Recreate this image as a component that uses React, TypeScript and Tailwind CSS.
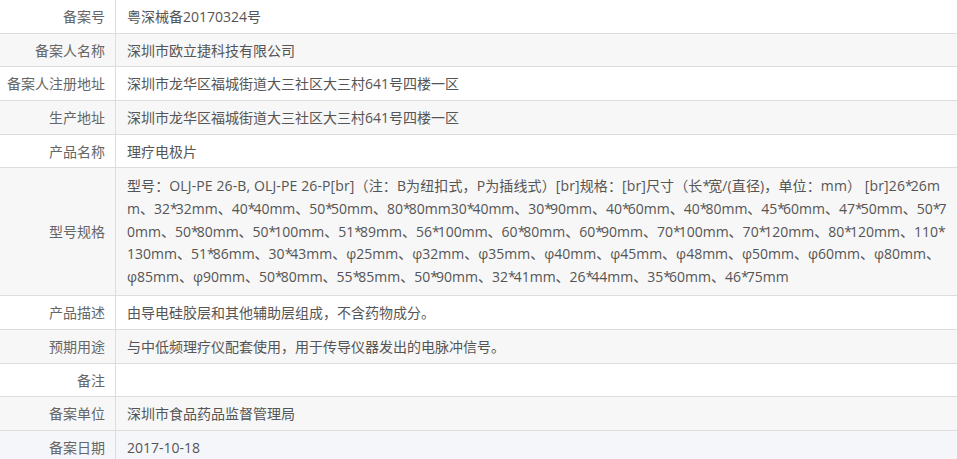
import React from 'react';

type Row = { label: string; value: string | string[]; h: string };

const specLines = [
  '型号：OLJ-PE 26-B, OLJ-PE 26-P[br]（注：B为纽扣式，P为插线式）[br]规格：[br]尺寸（长*宽/(直径)，单位：mm） [br]26*26m',
  'm、32*32mm、40*40mm、50*50mm、80*80mm30*40mm、30*90mm、40*60mm、40*80mm、45*60mm、47*50mm、50*7',
  '0mm、50*80mm、50*100mm、51*89mm、56*100mm、60*80mm、60*90mm、70*100mm、70*120mm、80*120mm、110*',
  '130mm、51*86mm、30*43mm、φ25mm、φ32mm、φ35mm、φ40mm、φ45mm、φ48mm、φ50mm、φ60mm、φ80mm、',
  'φ85mm、φ90mm、50*80mm、55*85mm、50*90mm、32*41mm、26*44mm、35*60mm、46*75mm',
];

// row heights include the 1px top border
const rows: Row[] = [
  { label: '备案号', value: '粤深械备20170324号', h: 'h-[34px]' },
  { label: '备案人名称', value: '深圳市欧立捷科技有限公司', h: 'h-[33px]' },
  { label: '备案人注册地址', value: '深圳市龙华区福城街道大三社区大三村641号四楼一区', h: 'h-[34px]' },
  { label: '生产地址', value: '深圳市龙华区福城街道大三社区大三村641号四楼一区', h: 'h-[34px]' },
  { label: '产品名称', value: '理疗电极片', h: 'h-[33px]' },
  { label: '型号规格', value: specLines, h: 'h-[128px]' },
  { label: '产品描述', value: '由导电硅胶层和其他辅助层组成，不含药物成分。', h: 'h-[34px]' },
  { label: '预期用途', value: '与中低频理疗仪配套使用，用于传导仪器发出的电脉冲信号。', h: 'h-[34px]' },
  { label: '备注', value: '', h: 'h-[33px]' },
  { label: '备案单位', value: '深圳市食品药品监督管理局', h: 'h-[34px]' },
  { label: '备案日期', value: '2017-10-18', h: 'h-[34px]' },
];

const rowBg = (i: number) => {
  if (i === rows.length - 1) return 'bg-[#f5f6fa]';
  return i % 2 === 1 ? 'bg-[#f7f7f7]' : 'bg-white';
};

// the asterisks are a bit wide in Open Sans, pull them in
const SpecLine = ({ text, first }: { text: string; first: boolean }) => {
  const parts = text.split('*');
  return (
    <div className={first ? 'tracking-[0.12px]' : ''}>
      {parts.map((p, i) => (
        <React.Fragment key={i}>
          {p}
          {i < parts.length - 1 && <span className="tracking-[-2px]">*</span>}
        </React.Fragment>
      ))}
    </div>
  );
};

export default function App() {
  return (
    <div className="w-[957px] h-[459px] overflow-hidden bg-white font-['Open_Sans','Noto_Sans_CJK_SC',sans-serif] text-[14px] text-[#555]">
      <div className="-mt-px flex flex-col">
        {rows.map((row, i) => (
          <div key={row.label} className={`flex shrink-0 box-border border-t border-[#ddd] ${row.h} ${rowBg(i)}`}>
            <div className="w-[116px] shrink-0 border-r border-[#ddd] pr-[10px] flex items-center justify-end text-[#666] leading-[23px] whitespace-nowrap">
              {row.label}
            </div>
            {Array.isArray(row.value) ? (
              <div className="flex-1 pl-[11px] pt-[7px] leading-[22.8px] whitespace-nowrap">
                {row.value.map((line, j) => (
                  <SpecLine key={line} text={line} first={j === 0} />
                ))}
              </div>
            ) : (
              <div className="flex-1 pl-[11px] flex items-center leading-[23px] whitespace-nowrap">{row.value}</div>
            )}
          </div>
        ))}
      </div>
    </div>
  );
}
